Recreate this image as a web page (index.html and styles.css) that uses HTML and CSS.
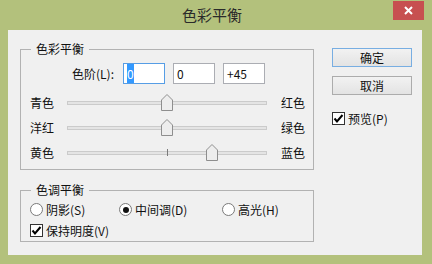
FILE: index.html
```html
<!DOCTYPE html>
<html lang="zh-CN">
<head>
  <meta charset="UTF-8">
  <meta name="viewport" content="width=device-width, initial-scale=1.0">
  <title>色彩平衡</title>
  <link rel="stylesheet" href="styles.css">
</head>
<body>
  <div class="window">
    <div class="titlebar">
      <span></span>
      <h1 class="title">色彩平衡</h1>
      <button class="close" aria-label="关闭">
        <svg width="31" height="19" viewBox="0 0 31 19"><path d="M12 6 L19 13 M19 6 L12 13" stroke="#fff" stroke-width="2" fill="none"/></svg>
      </button>
    </div>
    <div class="client">
      <div class="groups">
        <fieldset class="group group-color">
          <legend>色彩平衡</legend>
          <div class="levels">
            <label class="levels-label">色阶(L):</label>
            <span class="field focused"><span class="sel">0</span></span>
            <span class="field">0</span>
            <span class="field">+45</span>
          </div>
          <div class="sliders">
            <span>青色</span>
            <div class="track"><i class="tick"></i>
              <svg class="thumb" style="left:50%" width="12" height="17" viewBox="0 0 12 17"><path d="M0.5 6 L6 0.5 L11.5 6 V16.5 H0.5 Z" fill="#ededed" stroke="#8e8e8e"/></svg>
            </div>
            <span class="right">红色</span>
            <span>洋红</span>
            <div class="track"><i class="tick"></i>
              <svg class="thumb" style="left:50%" width="12" height="17" viewBox="0 0 12 17"><path d="M0.5 6 L6 0.5 L11.5 6 V16.5 H0.5 Z" fill="#ededed" stroke="#8e8e8e"/></svg>
            </div>
            <span class="right">绿色</span>
            <span>黄色</span>
            <div class="track"><i class="tick"></i>
              <svg class="thumb" style="left:72.5%" width="12" height="17" viewBox="0 0 12 17"><path d="M0.5 6 L6 0.5 L11.5 6 V16.5 H0.5 Z" fill="#ededed" stroke="#8e8e8e"/></svg>
            </div>
            <span class="right">蓝色</span>
          </div>
        </fieldset>
        <fieldset class="group group-tone">
          <legend>色调平衡</legend>
          <div class="radios">
            <label class="opt"><span class="radio"></span>阴影(S)</label>
            <label class="opt"><span class="radio on"></span>中间调(D)</label>
            <label class="opt"><span class="radio"></span>高光(H)</label>
          </div>
          <label class="opt check-row">
            <svg class="box" width="13" height="13" viewBox="0 0 13 13"><rect x="0.5" y="0.5" width="12" height="12" fill="#fff" stroke="#333"/><path d="M2.5 6.5 L5 9.5 L10.5 3" stroke="#000" stroke-width="2" fill="none"/></svg>保持明度(V)
          </label>
        </fieldset>
      </div>
      <div class="actions">
        <button class="btn default">确定</button>
        <button class="btn">取消</button>
        <label class="opt preview">
          <svg class="box" width="13" height="13" viewBox="0 0 13 13"><rect x="0.5" y="0.5" width="12" height="12" fill="#fff" stroke="#333"/><path d="M2.5 6.5 L5 9.5 L10.5 3" stroke="#000" stroke-width="2" fill="none"/></svg>预览(P)
        </label>
      </div>
    </div>
  </div>
</body>
</html>
```

FILE: styles.css
```css
body {
  margin: 0;
  font-family: "Noto Sans CJK SC", sans-serif;
  font-size: 12px;
  color: #111;
}
.window {
  width: 432px;
  height: 264px;
  background: #b3c17c;
  display: flex;
  flex-direction: column;
}
.titlebar {
  height: 30px;
  display: grid;
  grid-template-columns: 1fr auto 1fr;
  padding-right: 8px;
}
.title {
  margin: 0;
  font-size: 15px;
  font-weight: normal;
  line-height: 30px;
  color: #2a2a2a;
}
.close {
  justify-self: end;
  align-self: start;
  width: 31px;
  height: 19px;
  margin-top: 1px;
  padding: 0;
  border: none;
  background: #c75050;
  display: flex;
}
.client {
  height: 225px;
  margin: 0 10px 0 8px;
  background: #f0f0f0;
  display: flex;
}
.groups {
  padding: 12px 0 0 12px;
}
.group {
  box-sizing: border-box;
  width: 294px;
  margin: 0;
  border: 1px solid #b2b2b2;
  padding: 7px 0 4px 9px;
}
.group legend {
  margin-left: 1px;
  padding: 0 5px;
  line-height: 14px;
}
.levels {
  display: flex;
  align-items: center;
  gap: 8px;
  height: 21px;
}
.levels-label {
  width: 84px;
  text-align: right;
  margin-right: 1px;
}
.field {
  box-sizing: border-box;
  width: 42px;
  height: 21px;
  border: 1px solid #abadb3;
  background: #fff;
  padding-left: 3px;
  line-height: 19px;
}
.field.focused {
  border-color: #569de5;
}
.sel {
  background: #3399ff;
  color: #fff;
  padding: 1px 0;
}
.sliders {
  margin-top: 6px;
  display: grid;
  grid-template-columns: 37px 200px auto;
  grid-auto-rows: 25px;
  align-items: center;
}
.sliders .right {
  margin-left: 14px;
}
.track {
  position: relative;
  box-sizing: border-box;
  height: 4px;
  border: 1px solid #cbcbcb;
  background: #e4e4e4;
}
.tick {
  position: absolute;
  left: 50%;
  top: -3px;
  width: 1px;
  height: 7px;
  background: #7a7a7a;
}
.thumb {
  position: absolute;
  top: -8px;
  margin-left: -6px;
}
.group-tone {
  margin-top: 13px;
  padding: 2px 0 0 9px;
}
.radios {
  display: grid;
  grid-template-columns: 89px 103px auto;
  height: 21px;
  align-items: center;
}
.opt {
  display: flex;
  align-items: center;
  gap: 3px;
}
.check-row {
  height: 21px;
}
.radio {
  box-sizing: border-box;
  width: 13px;
  height: 13px;
  border: 1px solid #7a7a7a;
  border-radius: 50%;
  background: #fff;
  display: flex;
  align-items: center;
  justify-content: center;
}
.radio.on::after {
  content: "";
  width: 6px;
  height: 6px;
  border-radius: 50%;
  background: #111;
}
.actions {
  margin-left: 18px;
  padding-top: 18px;
  display: flex;
  flex-direction: column;
  align-items: flex-start;
}
.btn {
  width: 80px;
  height: 19px;
  margin-bottom: 9px;
  padding: 0;
  font-family: inherit;
  font-size: 12px;
  color: #111;
  border: 1px solid #acacac;
  background: linear-gradient(#f2f2f2, #e3e3e3);
}
.btn.default {
  border-color: #78aee2;
}
.preview {
  margin-top: 8px;
  height: 13px;
}
```
